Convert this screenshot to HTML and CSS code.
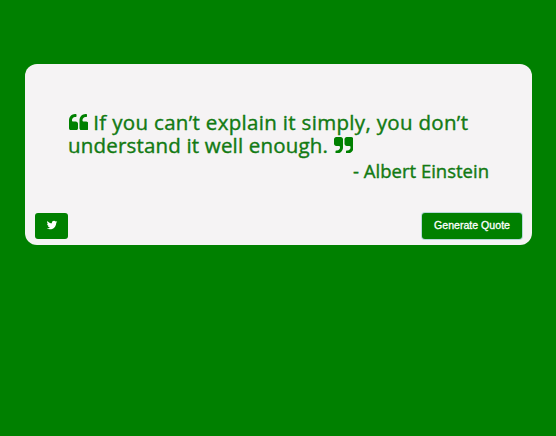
FILE: index.html
```html
<!DOCTYPE html>
<html lang="en">
<head>
<meta charset="utf-8">
<title>Quote Generator</title>
<link rel="stylesheet" href="styles.css">
</head>
<body>
<main class="quote-box">
  <blockquote class="quote">
    <p class="text"><svg class="mark" viewBox="64 128 1664 1408" aria-hidden="true"><path id="open-mark" d="M832 960v384q0 80-56 136t-136 56h-384q-80 0-136-56t-56-136v-704q0-104 40.500-198.500t109.500-163.500 163.500-109.500 198.500-40.500h64q26 0 45 19t19 45v128q0 26-19 45t-45 19h-64q-106 0-181 75t-75 181v32q0 40 28 68t68 28h224q80 0 136 56t56 136z"/><use href="#open-mark" x="896"/></svg> <span class="line-one">If you can’t explain it simply, you don’t</span><br><span class="line-two">understand it well enough.</span> <svg class="mark" viewBox="64 128 1664 1408" aria-hidden="true"><path id="close-mark" d="M832 320v704q0 104-40.500 198.500t-109.500 163.500-163.500 109.500-198.500 40.500h-64q-26 0-45-19t-19-45v-128q0-26 19-45t45-19h64q106 0 181-75t75-181v-32q0-40-28-68t-68-28h-224q-80 0-136-56t-56-136v-384q0-80 56-136t136-56h384q80 0 136 56t56 136z"/><use href="#close-mark" x="896"/></svg></p>
    <footer class="author">- Albert Einstein</footer>
  </blockquote>
  <div class="actions">
    <button class="btn tweet" aria-label="Tweet"><svg class="bird" viewBox="0 0 1792 1792" aria-hidden="true"><path d="M1684 408q-67 98-162 167 1 14 1 42 0 130-38 259.500t-115.500 248.500-184.500 210.500-258 146-323 54.500q-271 0-496-145 35 4 78 4 225 0 401-138-105-2-188-64.500t-114-159.500q33 5 61 5 43 0 85-11-112-23-185.500-111.500t-73.500-205.500v-4q68 38 146 41-66-44-105-115t-39-154q0-88 44-163 121 149 294.500 238.500t371.500 99.500q-8-38-8-74 0-134 94.500-228.500t228.500-94.500q140 0 236 102 109-21 205-78-37 115-142 178 93-10 186-50z"/></svg></button>
    <button class="btn generate">Generate Quote</button>
  </div>
</main>
</body>
</html>
```
FILE: styles.css
```css
* { box-sizing: border-box; }
body {
  margin: 0;
  min-height: 100vh;
  padding: 64px 24px 0 25px;
  background: #008000;
  color: #127a12;
}
.quote-box {
  display: flex;
  flex-direction: column;
  justify-content: space-between;
  height: 181px;
  padding: 47px 9px 6px 10px;
  border-radius: 12px;
  background: #f5f3f4;
}
.quote {
  margin: 0;
  padding: 0 34px 0 33px;
  font-family: "Open Sans", "Noto Sans", sans-serif;
  -webkit-text-stroke: 0.4px #127a12;
}
.text {
  margin: 0;
  font-size: 20.500px;
  line-height: 23px;
  white-space: nowrap;
}
.line-one { letter-spacing: 0.32px; }
.line-two { letter-spacing: 0.18px; }
.mark {
  width: 19.500px;
  height: 16.500px;
  margin-left: 0.500px;
  fill: #008000;
  stroke: none;
  vertical-align: 0;
}
.author {
  margin-top: 1px;
  font-size: 18.500px;
  line-height: 25px;
  text-align: right;
}
.actions {
  display: flex;
  justify-content: space-between;
  align-items: center;
}
.btn {
  display: flex;
  align-items: center;
  justify-content: center;
  height: 26px;
  padding: 0 0 2px;
  border: 0;
  border-radius: 3px;
  background: #008000;
  color: #fff;
  font: 10.600px "Liberation Sans", sans-serif;
}
.tweet { width: 33px; }
.bird {
  width: 12px;
  height: 12px;
  margin-left: 1px;
  fill: #fff;
}
.generate {
  width: 100px;
  margin-right: 1px;
  box-shadow: 0 0 0 1px #b5d9d9;
  -webkit-text-stroke: 0.3px #fff;
}
```
